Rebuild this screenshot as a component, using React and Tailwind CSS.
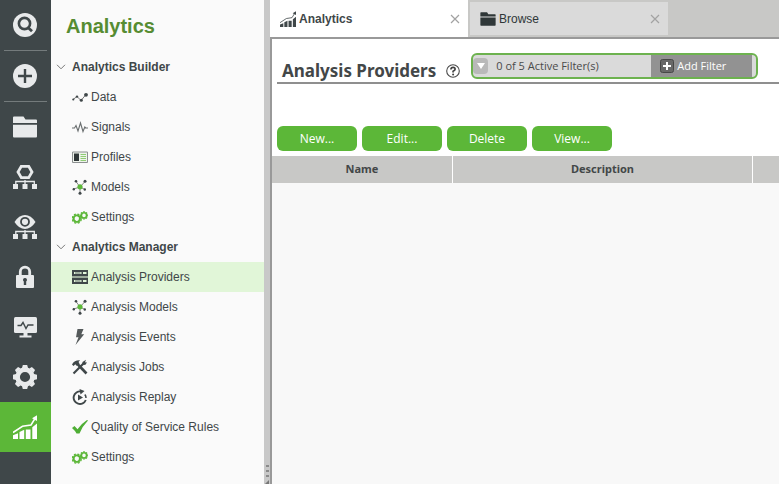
import React, { useState } from 'react';

/* ---------- Rail icons (24px) ---------- */

const SearchCircle = () => (
  <svg viewBox="0 0 24 24" className="w-6 h-6">
    <circle cx="12" cy="12" r="12" fill="currentColor" />
    <circle cx="11.5" cy="10.5" r="5.6" fill="none" stroke="#3f4749" strokeWidth="2.6" />
    <path d="M15 14.5l4 3.800" stroke="#3f4749" strokeWidth="2.800" />
  </svg>
);

const PlusCircle = () => (
  <svg viewBox="0 0 24 24" className="w-6 h-6">
    <circle cx="12" cy="12" r="12" fill="currentColor" />
    <path d="M12 5v14M5 12h14" stroke="#3f4749" strokeWidth="2.4" />
  </svg>
);

const Folder = ({ className }) => (
  <svg viewBox="0 0 24 22" className={className} fill="currentColor">
    <path d="M0 7V1.4Q0 .4 1 .4h9.5L12.5 3.5H23q1 0 1 1V7z" />
    <path d="M0 8.8h24V20.5q0 1-1 1H1q-1 0-1-1z" />
  </svg>
);

const TreeBase = () => (
  <>
    <path d="M2.8 19.5v-3h18.5v3M12 15v5" fill="none" stroke="currentColor" strokeWidth="1.3" />
    <path d="M0 19h5v5H0zM9.5 19h5v5h-5zM19 19h5v5h-5z" fill="currentColor" />
  </>
);

const HexTree = () => (
  <svg viewBox="0 0 24 24" className="w-6 h-6">
    <path d="M8.3 1.300h7.400l3.300 5.700-3.300 5.700H8.300L5 7z" fill="none" stroke="currentColor" strokeWidth="2.8" />
    <TreeBase />
  </svg>
);

const EyeTree = () => (
  <svg viewBox="0 0 24 24" className="w-6 h-6">
    <path d="M1.5 7Q6 0 12 0t10.5 7Q18 14 12 14T1.5 7z" fill="currentColor" />
    <circle cx="12" cy="6.8" r="4" fill="none" stroke="#3f4749" strokeWidth="1.8" />
    <TreeBase />
  </svg>
);

const Lock = () => (
  <svg viewBox="0 0 24 24" className="w-6 h-6">
    <path d="M7.300 12V6.800a4.700 4.700 0 0 1 9.400 0V12" fill="none" stroke="currentColor" strokeWidth="2.8" />
    <rect x="3" y="10" width="18" height="13" rx="1" fill="currentColor" />
    <path d="M12 13a2 2 0 0 1 1.200 3.600V20h-2.400v-3.400A2 2 0 0 1 12 13z" fill="#3f4749" />
  </svg>
);

const Monitor = () => (
  <svg viewBox="0 0 24 24" className="w-6 h-6">
    <rect x="1" y="2" width="23" height="16" rx="1.5" fill="currentColor" />
    <path d="M10.5 18h4v2.500h-4zM6.500 20.500h12v2h-12z" fill="currentColor" />
    <path d="M4.500 10.500h3.500l2-3 3 6 2-3.500h5.500" fill="none" stroke="#3f4749" strokeWidth="1.4" />
  </svg>
);

const teeth = [0, 45, 90, 135, 180, 225, 270, 315];

const Gear = ({ cx = 12, cy = 12, r = 12, turn = 0 }) => (
  <g transform={`translate(${cx} ${cy}) rotate(${turn}) scale(${r / 12})`}>
    <circle r="7.4" fill="none" stroke="currentColor" strokeWidth="4.6" />
    {teeth.map((a) => (
      <path key={a} d="M-3-9l.8-3h4.400l.8 3z" fill="currentColor" transform={`rotate(${a})`} />
    ))}
  </g>
);

const GearIcon = () => (
  <svg viewBox="0 0 24 24" className="w-6 h-6">
    <Gear />
  </svg>
);

const Chart = ({ className, lineWidth = 1.5 }) => (
  <svg viewBox="0 0 24 24" className={className}>
    <path
      d="M0 20.300l5-2V24H0zM6.500 17l4.700-2.200V24H6.500zM12.800 14.500h4.700V24h-4.700zM19.300 12.200L24 8.500V24h-4.700z"
      fill="currentColor"
    />
    <path d="M0 17.500L9.500 11.300l8.500-1.300L22 3.500" fill="none" stroke="currentColor" strokeWidth={lineWidth} />
    <path d="M24 .3v5.700l-5-2.800z" fill="currentColor" />
  </svg>
);

/* ---------- Tree icons (16px) ---------- */

const DataIcon = () => (
  <svg viewBox="0 0 16 16" className="w-4 h-4 shrink-0">
    <path d="M1 10.500L5 7.500l4 4 5-6" fill="none" stroke="#666" strokeWidth=".9" />
    <g fill="#3f4749">
      <circle cx="1.300" cy="10.500" r="1.100" />
      <circle cx="5" cy="7.600" r="1.200" />
      <circle cx="9.300" cy="11.200" r="1.500" />
      <circle cx="14" cy="5.800" r="1.900" />
    </g>
  </svg>
);

const SignalIcon = () => (
  <svg viewBox="0 0 16 16" className="w-4 h-4 shrink-0">
    <path
      d="M0 9h2.500L4 6.500l2 5.500 2.500-8 2.500 8.500 1.800-4.500 1 1H16"
      fill="none"
      stroke="#6a6f70"
      strokeWidth="1.1"
    />
  </svg>
);

const ProfileIcon = () => (
  <svg viewBox="0 0 16 16" className="w-4 h-4 shrink-0">
    <path d="M.5 3h15v10.500H.5z" fill="#eef3ec" stroke="#8c9090" />
    <path d="M2 4.500h5v7.500H2z" fill="#2f3637" />
    <path d="M8.500 5.500H14M8.500 7.500H14M8.500 9.500H14M8.500 11.500H14" stroke="#8fcc74" />
  </svg>
);

const ModelIcon = () => (
  <svg viewBox="0 0 16 16" className="w-4 h-4 shrink-0">
    <path d="M8 8L4 2.500M8 8L13 2.500M8 8L1.500 10M8 8l5 2.500M8 8v6.500" stroke="#777" strokeWidth=".9" />
    <g fill="#3f4749">
      <circle cx="4" cy="2.300" r="1.300" />
      <circle cx="13" cy="2.200" r="1.500" />
      <circle cx="1.800" cy="10.300" r="1.200" />
      <circle cx="12.800" cy="10.500" r="1.200" />
      <circle cx="8" cy="14.300" r="1.500" />
    </g>
    <circle cx="8" cy="7.800" r="2.600" fill="#5cb738" />
  </svg>
);

const GearsIcon = () => (
  <svg viewBox="0 0 16 16" className="w-4 h-4 shrink-0 text-[#5cb738]">
    <Gear cx={4.8} cy={9.6} r={5.2} turn={20} />
    <Gear cx={12} cy={6.4} r={4.2} />
  </svg>
);

const ServerIcon = () => (
  <svg viewBox="0 0 16 16" className="w-4 h-4 shrink-0">
    <path d="M0 1h16v6.500H0zM0 8.500h16V15H0z" fill="#3f4749" />
    <path d="M2 3h7.500v2H2zM11 3h3.500v2H11zM2 11h7.500v2H2zM11 11h3.500v2H11z" fill="#e2f6da" />
    <path d="M3 4h5.500M3 12h5.500" stroke="#3f4749" strokeWidth=".8" />
    <path d="M0 8h16" stroke="#a9b8a6" />
  </svg>
);

const BoltIcon = () => (
  <svg viewBox="0 0 16 16" className="w-4 h-4 shrink-0">
    <path d="M5.500 0h6L9.300 5.200h2.900L3.500 16l3-7.800H4z" fill="#555a5b" />
  </svg>
);

const ToolsIcon = () => (
  <svg viewBox="0 0 16 16" className="w-4 h-4 shrink-0">
    <path d="M5 4.500L14.500 14.500" stroke="#3f4749" strokeWidth="2.6" />
    <path d="M1.500 14.500L12 4" stroke="#3f4749" strokeWidth="2.2" />
    <path d="M0 5.500Q2.500 1 8 1.300L6.500 3l1 1.500-3 2.300L3.300 5.300 1.500 7z" fill="#3f4749" />
    <path d="M10.500 5.500V3L14 .8 13 3.300l2 .2L13.200 6z" fill="#3f4749" />
  </svg>
);

const ReplayIcon = () => (
  <svg viewBox="0 0 16 16" className="w-4 h-4 shrink-0">
    <path d="M9 2.500A6.300 6.300 0 1 0 13.800 11" fill="none" stroke="#3f4749" strokeWidth="1.9" />
    <path d="M7.500 0l5 2-4 3.500z" fill="#3f4749" />
    <path d="M6 5.500l5 3-5 3z" fill="#3f4749" />
    <path d="M12.800 5.500q1.300 1.500 1.200 3.500" fill="none" stroke="#3f4749" strokeWidth="1.5" />
  </svg>
);

const CheckIcon = () => (
  <svg viewBox="0 0 16 16" className="w-4 h-4 shrink-0">
    <path d="M0 9l2.500-2 3 3.200Q9.500 4.500 15 1l1 .5Q10.500 7 7.500 14.500H4.500Q3 11.500 0 9z" fill="#4fae35" />
  </svg>
);

const Chevron = () => (
  <svg viewBox="0 0 10 6" className="w-[10px] h-[6px] shrink-0">
    <path d="M1 .8l4 4 4-4" fill="none" stroke="#777" strokeWidth="1" />
  </svg>
);

const CloseIcon = () => (
  <svg viewBox="0 0 10 10" className="w-[10px] h-[10px]">
    <path d="M1 1l8 8M9 1L1 9" stroke="#a2a2a2" strokeWidth="1.2" />
  </svg>
);

const HelpIcon = () => (
  <svg viewBox="0 0 14 14" className="w-[14px] h-[14px]">
    <circle cx="7" cy="7" r="6.300" fill="#fff" stroke="#4a4a4a" strokeWidth="1.1" />
    <path d="M4.900 5.500Q5 3.400 7.100 3.400t2 1.900Q9.100 6.500 7.100 7.300v1.200" fill="none" stroke="#3f3f3f" strokeWidth="1.7" />
    <circle cx="7.100" cy="10.400" r="1" fill="#3f3f3f" />
  </svg>
);

const AddIcon = () => (
  <svg viewBox="0 0 14 14" className="w-[14px] h-[14px]">
    <rect x=".5" y=".5" width="13" height="13" rx="2" fill="#686868" stroke="#484848" />
    <path d="M7 3v8M3 7h8" stroke="#fff" strokeWidth="2" />
  </svg>
);

/* ---------- Data ---------- */

const railItems = [
  { id: 'search', label: 'Search', icon: <SearchCircle />, divider: true },
  { id: 'new', label: 'New', icon: <PlusCircle />, divider: true },
  { id: 'browse', label: 'Browse', icon: <Folder className="w-6 h-[22px]" /> },
  { id: 'modeling', label: 'Modeling', icon: <HexTree /> },
  { id: 'visualization', label: 'Visualization', icon: <EyeTree /> },
  { id: 'security', label: 'Security', icon: <Lock /> },
  { id: 'monitoring', label: 'Monitoring', icon: <Monitor /> },
  { id: 'manage', label: 'Manage', icon: <GearIcon /> },
  { id: 'analytics', label: 'Analytics', icon: <Chart className="w-6 h-6" /> },
];

const groups = [
  {
    title: 'Analytics Builder',
    items: [
      { id: 'data', label: 'Data', icon: <DataIcon /> },
      { id: 'signals', label: 'Signals', icon: <SignalIcon /> },
      { id: 'profiles', label: 'Profiles', icon: <ProfileIcon /> },
      { id: 'models', label: 'Models', icon: <ModelIcon /> },
      { id: 'builder-settings', label: 'Settings', icon: <GearsIcon /> },
    ],
  },
  {
    title: 'Analytics Manager',
    items: [
      { id: 'providers', label: 'Analysis Providers', icon: <ServerIcon /> },
      { id: 'analysis-models', label: 'Analysis Models', icon: <ModelIcon /> },
      { id: 'events', label: 'Analysis Events', icon: <BoltIcon /> },
      { id: 'jobs', label: 'Analysis Jobs', icon: <ToolsIcon /> },
      { id: 'replay', label: 'Analysis Replay', icon: <ReplayIcon /> },
      { id: 'qos', label: 'Quality of Service Rules', icon: <CheckIcon /> },
      { id: 'manager-settings', label: 'Settings', icon: <GearsIcon /> },
    ],
  },
];

const actions = ['New...', 'Edit...', 'Delete', 'View...'];

/* ---------- Layout ---------- */

const Rail = () => (
  <nav className="w-[51px] shrink-0 bg-[#3f4749] text-[#e8eaeb]">
    {railItems.map((item) => (
      <React.Fragment key={item.id}>
        <button
          aria-label={item.label}
          className={`w-full h-[50px] pl-[13px] flex items-center ${item.id === 'analytics' ? 'bg-[#5cb738] text-white' : ''}`}
        >
          {item.icon}
        </button>
        {item.divider && <div className="h-px mx-1 bg-[#747b7c]"></div>}
      </React.Fragment>
    ))}
  </nav>
);

const Sidebar = ({ selected, onSelect }) => {
  const [closed, setClosed] = useState({});

  return (
    <aside className="w-[213px] shrink-0 bg-[#fafafa] text-[#3f4749]">
      <h1 className="h-[52px] pl-[15px] flex items-center text-xl font-bold text-[#568c32]">Analytics</h1>
      {groups.map((group) => (
        <section key={group.title}>
          <button
            onClick={() => setClosed({ ...closed, [group.title]: !closed[group.title] })}
            className="w-full h-[30px] pl-[5px] flex items-center gap-[6px] text-xs font-bold"
          >
            <Chevron />
            {group.title}
          </button>
          {!closed[group.title] && (
            <ul>
              {group.items.map((item) => (
                <li key={item.id}>
                  <button
                    onClick={() => onSelect(item.id)}
                    className={`w-full h-[30px] pl-[21px] flex items-center gap-[3px] text-xs ${selected === item.id ? 'bg-[#e1f6d8]' : ''}`}
                  >
                    {item.icon}
                    {item.label}
                  </button>
                </li>
              ))}
            </ul>
          )}
        </section>
      ))}
    </aside>
  );
};

const Splitter = () => (
  <div className="w-[6px] shrink-0 bg-[#c8c8c8] flex flex-col items-center justify-end gap-[3px]">
    <span className="w-[3px] h-[2px] bg-[#8a8a8a]"></span>
    <span className="w-[3px] h-[2px] bg-[#8a8a8a]"></span>
    <span className="w-[3px] h-[2px] bg-[#8a8a8a]"></span>
    <svg viewBox="0 0 4 4" className="w-1 h-1">
      <path d="M0 4l4-4v4z" fill="#777" />
    </svg>
  </div>
);

const TabStrip = () => (
  <div className="h-[37px] shrink-0 flex bg-[#c8c8c6] text-xs text-[#2f3738]">
    <div className="w-[198px] bg-white flex items-center pl-[10px] pr-2">
      <button className="flex-1 flex items-center gap-[3px] font-bold text-[#3f4749]">
        <Chart className="w-4 h-4" lineWidth={1.2} />
        Analytics
      </button>
      <button aria-label="Close Analytics"><CloseIcon /></button>
    </div>
    <div className="w-[198px] my-[2px] ml-[2px] bg-[#dadada] flex items-center pl-[10px] pr-2">
      <button className="flex-1 flex items-center gap-[3px]">
        <Folder className="w-4 h-[14px]" />
        Browse
      </button>
      <button aria-label="Close Browse"><CloseIcon /></button>
    </div>
  </div>
);

const FilterBar = () => (
  <div className="w-[287px] h-[26px] flex items-stretch overflow-hidden rounded-[6px] border-2 border-[#6db24f] bg-[#dadada] font-['Open_Sans',sans-serif] text-[11px]">
    <button aria-label="Show filters" className="w-[15px] my-[3px] flex items-center justify-center rounded-sm bg-[#b9b9b9]">
      <svg viewBox="0 0 8 6" className="w-2 h-[6px]"><path d="M0 0h8L4 6z" fill="#fff" /></svg>
    </button>
    <span className="flex-1 pl-2 flex items-center text-[#4a4a4a]">0 of 5 Active Filter(s)</span>
    <button className="w-[101px] mr-1 pl-[9px] flex items-center gap-[3px] bg-[#929292] text-white">
      <AddIcon />
      Add Filter
    </button>
  </div>
);

const Providers = () => (
  <main className="flex-1 flex flex-col border-t-2 border-l-2 border-[#999] bg-white font-['Noto_Sans','Open_Sans',sans-serif]">
    <div className="h-[45px] ml-[5px] pl-[5px] flex items-start border-b-2 border-[#8f8f8f]">
      <h2 className="pt-[20px] text-[17px] leading-6 font-bold text-[#434748]">Analysis Providers</h2>
      <button aria-label="Help" className="mt-[25px] ml-[10px]"><HelpIcon /></button>
      <div className="mt-[14px] ml-[11px]">
        <FilterBar />
      </div>
    </div>
    <div className="pt-[42px] pb-[5px] pl-[5px] flex gap-[5px] font-['Open_Sans',sans-serif]">
      {actions.map((label) => (
        <button key={label} className="w-20 h-[25px] rounded-md bg-[#5cb738] text-xs text-white">
          {label}
        </button>
      ))}
    </div>
    <div className="flex-1 bg-[#f8f8f8]">
      <table className="w-full table-fixed border-separate border-spacing-0">
        <thead>
          <tr className="bg-[#c8c8c6] text-[11px] text-[#434748]">
            <th className="w-[181px] h-[27px] p-0 border-r border-white">Name</th>
            <th className="p-0 border-r border-white">Description</th>
            <th aria-label="More" className="w-[26px] p-0"></th>
          </tr>
        </thead>
        <tbody></tbody>
      </table>
    </div>
  </main>
);

export default function App() {
  const [selected, setSelected] = useState('providers');

  return (
    <div className="min-h-screen flex font-['Liberation_Sans',Arial,sans-serif]">
      <Rail />
      <Sidebar selected={selected} onSelect={setSelected} />
      <Splitter />
      <div className="flex-1 min-w-0 flex flex-col">
        <TabStrip />
        <Providers />
      </div>
    </div>
  );
}
